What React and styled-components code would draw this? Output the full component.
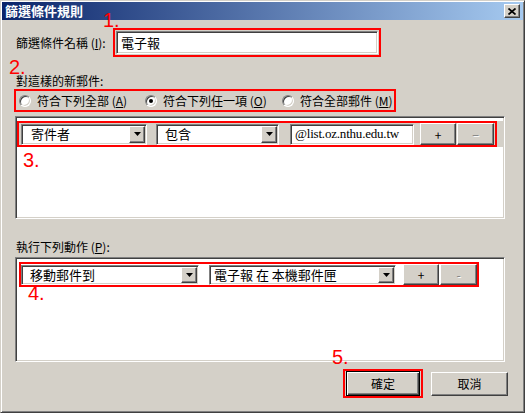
import React from "react";
import styled, { createGlobalStyle } from "styled-components";

const GlobalStyle = createGlobalStyle`
    body {
        margin: 0;
        background: #D4D0C8;
        font-family: "Noto Sans CJK TC", "Liberation Sans", sans-serif;
        font-size: 12px;
        color: #000;
    }
`;

const CloseIcon = () => (
    <svg width="8" height="7" viewBox="0 0 8 7">
        <path d="M0.5 0.5 L7.5 6.5 M7.5 0.5 L0.5 6.5" stroke="#000" strokeWidth="1.7" />
    </svg>
);

const ArrowIcon = () => (
    <svg width="7" height="4" viewBox="0 0 7 4">
        <path d="M0 0 H7 L3.5 4 Z" fill="#000" />
    </svg>
);

const Combo = ({ text, width, height, indent }) => (
    <ComboBox $w={width} $h={height}>
        <ComboText $indent={indent}>{text}</ComboText>
        <DropButton>
            <ArrowIcon />
        </DropButton>
    </ComboBox>
);

const Radio = ({ label, accel, checked, width }) => (
    <RadioItem $w={width}>
        <RadioCircle $checked={checked} />
        <span>
            {label} (<u>{accel}</u>)
        </span>
    </RadioItem>
);

const App = () => {
    return (
        <>
            <GlobalStyle />
            <Window>
                <TitleBar>
                    <TitleText>篩選條件規則</TitleText>
                    <CloseButton>
                        <CloseIcon />
                    </CloseButton>
                </TitleBar>
                <Client>
                    <NameRow>
                        <Label $w={97}>
                            篩選條件名稱 (<u>I</u>):
                        </Label>
                        <Highlight $pad="1px">
                            <Field $w={262} $h={23}>電子報</Field>
                        </Highlight>
                    </NameRow>

                    <SectionLabel $top={17}>對這樣的新郵件:</SectionLabel>
                    <RadioGroup>
                        <Radio label="符合下列全部" accel="A" width={126} />
                        <Radio label="符合下列任一項" accel="O" width={137} checked />
                        <Radio label="符合全部郵件" accel="M" />
                    </RadioGroup>

                    <ListBox $top={4} $h={103}>
                        <CriteriaRow>
                            <Highlight $w={480} $pad="0 0 0 2px">
                                <Combo text="寄件者" width={126} height={21} indent={8} />
                                <Spacer $w={9} />
                                <Combo text="包含" width={123} height={21} indent={7} />
                                <Spacer $w={11} />
                                <Field $w={124} $h={21} $latin>@list.oz.nthu.edu.tw</Field>
                                <Spacer $w={6} />
                                <Button $w={36} $h={22}>+</Button>
                                <Spacer $w={1} />
                                <Button $w={37} $h={22} disabled>−</Button>
                            </Highlight>
                        </CriteriaRow>
                    </ListBox>

                    <SectionLabel $top={21}>
                        執行下列動作 (<u>P</u>):
                    </SectionLabel>
                    <ListBox $top={3} $h={105}>
                        <ActionRow>
                            <Highlight $w={460} $h={25}>
                                <Combo text="移動郵件到" width={178} height={20} indent={7} />
                                <Spacer $w={10} />
                                <Combo text="電子報 在 本機郵件匣" width={187} height={20} indent={3} />
                                <Spacer $w={7} />
                                <Button $w={36} $h={21}>+</Button>
                                <Spacer $w={1} />
                                <Button $w={37} $h={21} disabled>-</Button>
                            </Highlight>
                        </ActionRow>
                    </ListBox>

                    <Footer>
                        <Highlight $pad="0 1px">
                            <Button $w={74} $h={25} $default>確定</Button>
                        </Highlight>
                        <Button $w={77} $h={24}>取消</Button>
                    </Footer>
                </Client>

                <Note $x={102} $y={12}>1.</Note>
                <Note $x={8} $y={59}>2.</Note>
                <Note $x={22} $y={152}>3.</Note>
                <Note $x={27} $y={285}>4.</Note>
                <Note $x={331} $y={349}>5.</Note>
            </Window>
        </>
    );
};

export default App;

const Window = styled.div`
    position: relative;
    width: 525px;
    height: 413px;
    box-sizing: border-box;
    padding: 1px;
    display: flex;
    flex-direction: column;
    background: #D4D0C8;
    border: 1px solid;
    border-color: #D4D0C8 #404040 #404040 #D4D0C8;
    box-shadow: inset 1px 1px #fff, inset -1px -1px #808080;
    overflow: hidden;
`;

const TitleBar = styled.div`
    height: 18px;
    flex-shrink: 0;
    display: flex;
    align-items: center;
    justify-content: space-between;
    padding: 0 3px 0 3px;
    background: linear-gradient(to right, #0A246A, #A6CAF0);
`;

const TitleText = styled.span`
    color: #fff;
    font-weight: bold;
    font-size: 13px;
    line-height: 18px;
`;

const raised = `
    background: #D4D0C8;
    border: 1px solid;
    border-color: #fff #404040 #404040 #fff;
    box-shadow: inset -1px -1px #808080;
    box-sizing: border-box;
`;

const sunken = `
    border: 1px solid;
    border-color: #808080 #fff #fff #808080;
    box-shadow: inset 1px 1px #404040, inset -1px -1px #D4D0C8;
    box-sizing: border-box;
`;

const CloseButton = styled.div`
    ${raised}
    width: 16px;
    height: 14px;
    display: flex;
    align-items: center;
    justify-content: center;
`;

const Client = styled.div`
    flex: 1;
    display: flex;
    flex-direction: column;
    padding: 8px 13px 0 13px;
`;

const NameRow = styled.div`
    display: flex;
    align-items: center;
    margin-left: 1px;
`;

const Label = styled.span`
    width: ${(p) => p.$w}px;
    line-height: 14px;
    white-space: nowrap;
`;

const Highlight = styled.div`
    display: flex;
    align-items: center;
    box-sizing: border-box;
    border: 2px solid #FF0000;
    padding: ${(p) => p.$pad || "0"};
    ${(p) => p.$w && `width: ${p.$w}px;`}
    ${(p) => p.$h && `height: ${p.$h}px;`}
`;

const Field = styled.div`
    ${sunken}
    width: ${(p) => p.$w}px;
    height: ${(p) => p.$h}px;
    background: #fff;
    display: flex;
    align-items: center;
    padding: 0 4px;
    white-space: nowrap;
    overflow: hidden;
    font-family: ${(p) =>
        p.$latin
            ? `"Liberation Serif", "Noto Sans CJK TC", serif`
            : `"Noto Sans CJK TC", sans-serif`};
    font-size: 13px;
    letter-spacing: ${(p) => (p.$latin ? "-0.2px" : "0")};
`;

const SectionLabel = styled.div`
    margin-top: ${(p) => p.$top}px;
    margin-left: 1px;
    line-height: 14px;
`;

const RadioGroup = styled.div`
    margin: 1px 0 0 -1px;
    width: 382px;
    height: 23px;
    box-sizing: border-box;
    border: 2px solid #FF0000;
    display: flex;
    align-items: center;
    padding-left: 3px;
`;

const RadioItem = styled.label`
    display: flex;
    align-items: center;
    gap: 6px;
    white-space: nowrap;
    ${(p) => p.$w && `width: ${p.$w}px;`}
    flex-shrink: 0;
`;

const RadioCircle = styled.span`
    position: relative;
    width: 12px;
    height: 12px;
    box-sizing: border-box;
    border-radius: 50%;
    background: #fff;
    border: 1px solid;
    border-color: #808080 #fff #fff #808080;
    box-shadow: inset 1px 1px #404040, inset -1px -1px #D4D0C8;

    &::after {
        content: "";
        display: ${(p) => (p.$checked ? "block" : "none")};
        position: absolute;
        left: 3px;
        top: 3px;
        width: 4px;
        height: 4px;
        border-radius: 50%;
        background: #000;
    }
`;

const ListBox = styled.div`
    ${sunken}
    margin-top: ${(p) => p.$top}px;
    width: 490px;
    height: ${(p) => p.$h}px;
    background: #fff;
    flex-shrink: 0;
`;

const CriteriaRow = styled.div`
    margin: 4px 1px 0 1px;
    height: 26px;
    background: #D4D0C8;
    display: flex;
`;

const ActionRow = styled.div`
    margin: 4px 0 0 3px;
    display: flex;
`;

const ComboBox = styled.div`
    ${sunken}
    width: ${(p) => p.$w}px;
    height: ${(p) => p.$h}px;
    padding: 1px;
    background: #fff;
    display: flex;
    align-items: center;
    flex-shrink: 0;
`;

const ComboText = styled.div`
    flex: 1;
    padding-left: ${(p) => p.$indent ?? 4}px;
    font-size: 13px;
    line-height: 14px;
    white-space: nowrap;
`;

const DropButton = styled.div`
    ${raised}
    width: 16px;
    align-self: stretch;
    display: flex;
    align-items: center;
    justify-content: center;
`;

const Spacer = styled.div`
    width: ${(p) => p.$w}px;
    flex-shrink: 0;
`;

const Button = styled.div`
    ${raised}
    width: ${(p) => p.$w}px;
    height: ${(p) => p.$h}px;
    flex-shrink: 0;
    display: flex;
    align-items: center;
    justify-content: center;
    font-size: 12px;
    color: ${(p) => (p.disabled ? "#808080" : "#000")};
    text-shadow: ${(p) => (p.disabled ? "1px 1px #fff" : "none")};
    ${(p) =>
        p.$default &&
        `
        border: 1px solid #000;
        box-shadow: inset 1px 1px #fff, inset -1px -1px #404040, inset -2px -2px #808080;
    `}
`;

const Footer = styled.div`
    margin-top: 7px;
    display: flex;
    align-items: center;
    justify-content: flex-end;
    gap: 8px;
    padding-right: 2px;
`;

const Note = styled.div`
    position: absolute;
    left: ${(p) => p.$x}px;
    top: ${(p) => p.$y}px;
    color: #FF0000;
    font-family: "Liberation Sans", sans-serif;
    font-size: 20px;
    line-height: 14px;
`;
